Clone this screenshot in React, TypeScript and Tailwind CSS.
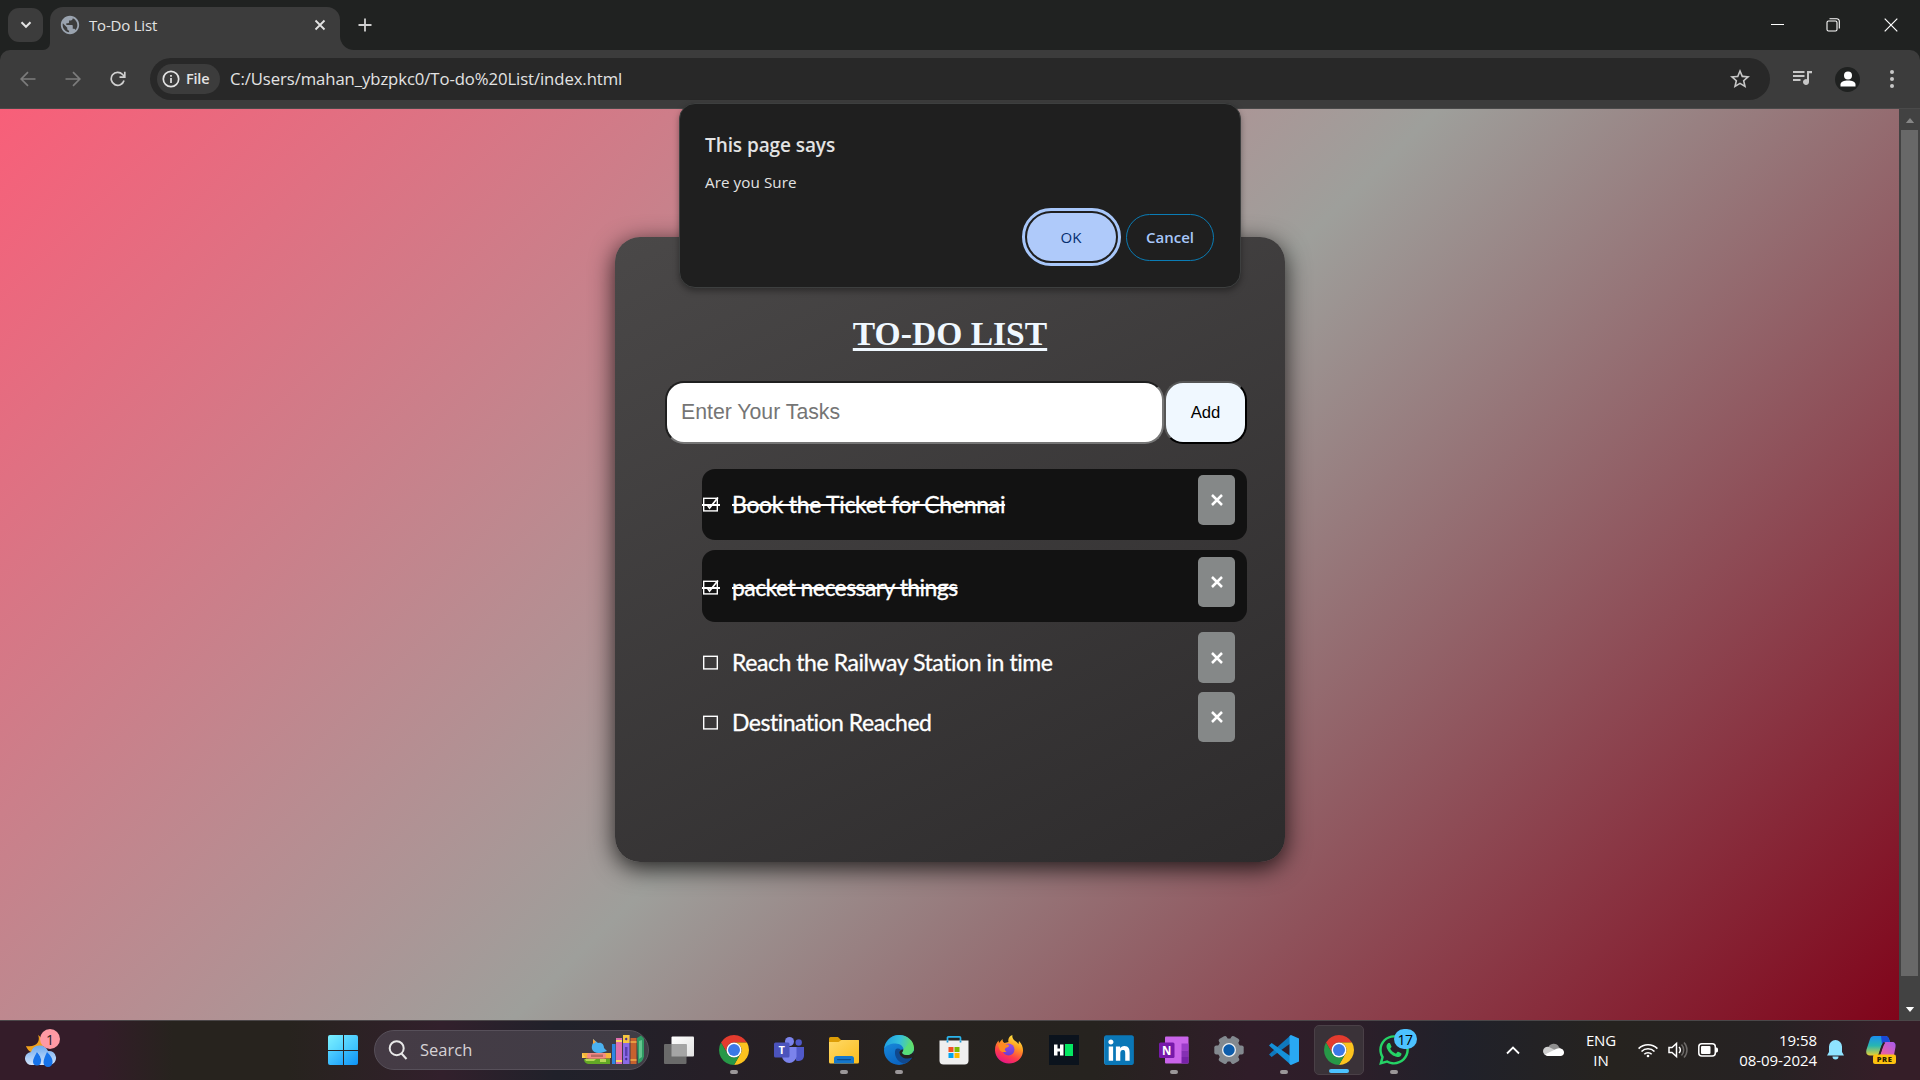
import React from "react";
import { FaLinkedin, FaWhatsapp } from "react-icons/fa";
import { MdStarOutline, MdPublic } from "react-icons/md";

const UI = "font-['Open_Sans','Noto_Sans',sans-serif]";

function ChromeIcon() {
  return (
    <svg viewBox="2 2 44 44" className="size-[30px]">
      <path d="M4.95 13A22 22 0 0 1 43.05 13H24A11 11 0 0 0 14.47 29.5Z" fill="#e33b2e" />
      <path d="M43.05 13A22 22 0 0 1 24 46L33.53 29.5A11 11 0 0 0 24 13Z" fill="#fcc31e" />
      <path d="M24 46A22 22 0 0 1 4.95 13L14.47 29.5A11 11 0 0 0 33.53 29.5Z" fill="#279847" />
      <circle cx="24" cy="24" r="11" fill="#fff" />
      <circle cx="24" cy="24" r="8.8" fill="#3b78e7" />
    </svg>
  );
}

function TaskViewIcon() {
  return (
    <svg viewBox="0 0 30 30" className="size-[30px]">
      <defs>
        <linearGradient id="tv" x1="0" y1="0" x2="1" y2="1"><stop stopColor="#fff" /><stop offset="1" stopColor="#e2e2e2" /></linearGradient>
      </defs>
      <rect x="7.500" y="1.500" width="22.500" height="20" rx="1" fill="url(#tv)" />
      <rect x="0" y="9" width="22.500" height="20" rx="1" fill="#6a6a6a" />
      <rect x="7.500" y="9" width="15" height="12.500" fill="#a5a5a5" />
    </svg>
  );
}

function TeamsIcon() {
  return (
    <svg viewBox="0 0 30 30" className="size-[30px]">
      <circle cx="24.700" cy="7.500" r="3.200" fill="#5059c9" />
      <path d="M20 12h10v8.500a5.500 5.500 0 0 1-8 5z" fill="#5059c9" />
      <circle cx="15.500" cy="6.500" r="4.500" fill="#7b83eb" />
      <path d="M8 12h14.500v9.500a7.300 7.300 0 0 1-14.500 0z" fill="#7b83eb" />
      <rect x="0" y="7.500" width="15.500" height="15" rx="1.500" fill="#4b53bc" />
      <text x="7.700" y="19" textAnchor="middle" fontSize="11" fontWeight="700" fill="#fff" fontFamily="Open Sans">T</text>
    </svg>
  );
}

function FolderIcon() {
  return (
    <svg viewBox="0 0 30 30" className="size-[30px]">
      <defs>
        <linearGradient id="fo" x1="0" y1="0" x2="1" y2="1"><stop stopColor="#ffd968" /><stop offset="1" stopColor="#fbbd1d" /></linearGradient>
      </defs>
      <path d="M0 3.500a1.500 1.500 0 0 1 1.500-1.500h7.500l3 3H30v6H0z" fill="#dd9d06" />
      <path d="M0 7h9.500l3-2H29a1 1 0 0 1 1 1v21a1.500 1.500 0 0 1-1.500 1.500h-27A1.500 1.500 0 0 1 0 27z" fill="url(#fo)" />
      <path d="M5 28.500v-5a2.500 2.500 0 0 1 2.500-2.500h15a2.500 2.500 0 0 1 2.500 2.500v5z" fill="#1577cb" />
      <rect x="8" y="24" width="14" height="1.200" rx=".6" fill="#0b4c8c" />
    </svg>
  );
}

function EdgeIcon() {
  return (
    <svg viewBox="0 0 30 30" className="size-[30px]">
      <defs>
        <linearGradient id="e1" x1="0" y1=".4" x2="1" y2=".5"><stop stopColor="#1f9fe0" /><stop offset=".5" stopColor="#35c0dc" /><stop offset="1" stopColor="#6ae35b" /></linearGradient>
        <linearGradient id="e2" x1="0" y1="0" x2=".5" y2="1"><stop stopColor="#1b93e2" /><stop offset="1" stopColor="#0a63c0" /></linearGradient>
      </defs>
      <circle cx="15" cy="15" r="15" fill="url(#e2)" />
      <path d="M.3 13.500C1.500 5.500 7.500 0 15.200 0 23.500 0 30 6 30 13c0 4.500-3.500 7-7 7-3.200 0-4.700-1.200-4.700-2.200 0-.8 1.200-1.300 1.200-3.300 0-3.200-3.500-6-8-6C6.500 8.500 2 10.500.3 13.500z" fill="url(#e1)" />
      <path d="M11.500 14.500C9.500 20 13 27 20 28.700 24 27.500 27 25 28.500 21.500 23 24.500 16 23 15.300 18c-.2-1.600.6-2.700 1.500-3.500-1.500-1.500-4.500-1.500-5.300 0z" fill="#10498f" />
      <path d="M19.500 14.500c0 2-1.200 2.500-1.200 3.300 0 1 1.500 2.200 4.700 2.200 2.800 0 5.600-1.600 6.600-4.300L30 20l-2 2.500C23 25 16 23 15.300 18c-.2-1.600.9-3.600 4.200-3.500z" fill="#24211f" />
      <path d="M30 13c0 4.500-3.500 7-7 7-3.200 0-4.700-1.200-4.700-2.200 0-.8 1.200-1.300 1.200-3.300L25 8z" fill="#58dd78" />
      <path d="M28.800 20.500l2 .500-1 3-2-1z" fill="#24211f" />
    </svg>
  );
}

function StoreIcon() {
  return (
    <svg viewBox="0 0 30 30" className="size-[30px]">
      <path d="M8.500 7V2.800a1 1 0 0 1 1-1h11a1 1 0 0 1 1 1V7" fill="none" stroke="#2bb5ec" strokeWidth="1.700" />
      <path d="M.5 5.500h29v20a4 4 0 0 1-4 4h-21a4 4 0 0 1-4-4z" fill="#efefef" />
      <path d="M8.500 7.500v-2m13 2v-2" stroke="#1795d4" strokeWidth="1.700" />
      <rect x="9.500" y="12" width="5" height="5" fill="#f25022" />
      <rect x="15.500" y="12" width="5" height="5" fill="#7fba00" />
      <rect x="9.500" y="18" width="5" height="5" fill="#00a4ef" />
      <rect x="15.500" y="18" width="5" height="5" fill="#ffb900" />
    </svg>
  );
}

function FirefoxIcon() {
  return (
    <svg viewBox="0 0 30 30" className="size-[30px]">
      <defs>
        <linearGradient id="ff" x1=".75" y1="0" x2=".3" y2="1"><stop stopColor="#fff04a" /><stop offset=".35" stopColor="#ff9f20" /><stop offset=".7" stopColor="#ff3b4b" /><stop offset="1" stopColor="#e3128c" /></linearGradient>
        <linearGradient id="fp" x1="0" y1="0" x2="0" y2="1"><stop stopColor="#9a4ee8" /><stop offset="1" stopColor="#6a3cd0" /></linearGradient>
      </defs>
      <path d="M18.500 0c-.8 2.500 1 5 3.500 6.500 1.200.8 2 1.800 2.400 2.700L25 6c3 3 4.200 6.800 4 10-.5 7.500-6.500 12.500-14 12.500S1.200 22.500 1 15.500C.9 11 2.300 8 4.500 5.500L5 8l3.500-4c0 2 .5 3 2 4l4-1c-1-3 1-6 4-7z" fill="url(#ff)" />
      <circle cx="14.500" cy="14.500" r="6" fill="url(#fp)" />
      <path d="M4 10c3-2.500 6-2 8-.5 1.500 0 3 .5 3 1.200 0 1-1.500 1.600-3 2-1.800 1-1.500 3 .5 4-3 1-6 .2-7-2.200z" fill="#ff8a20" />
    </svg>
  );
}

function HackerEarthIcon() {
  return (
    <svg viewBox="0 0 30 30" className="size-[30px]">
      <rect width="30" height="30" fill="#0b131d" />
      <path d="M5 9.500h3.500v4h2.500v-4h3.500v11h-3.500v-4H8.500v4H5z" fill="#fff" />
      <rect x="16" y="9" width="8" height="12" fill="#04e762" />
    </svg>
  );
}

function OneNoteIcon() {
  return (
    <svg viewBox="0 0 30 30" className="size-[30px]">
      <rect x="6" y="1.500" width="23.500" height="27" rx="1" fill="#ca64ea" />
      <rect x="22.500" y="8.500" width="7" height="7" fill="#9b3cc8" />
      <rect x="22.500" y="15.500" width="7" height="6.500" fill="#8530b4" />
      <rect x="22.500" y="22" width="7" height="6.500" fill="#7722a8" />
      <rect x="0" y="7.500" width="15.500" height="15.500" rx="1.500" fill="#7719aa" />
      <text x="7.700" y="19.500" textAnchor="middle" fontSize="11.500" fontWeight="700" fill="#fff" fontFamily="Open Sans">N</text>
    </svg>
  );
}

function SettingsIcon() {
  return (
    <svg viewBox="0 0 30 30" className="size-[30px]">
      <g fill="#83898f">
        <circle cx="15" cy="15" r="11.500" />
        <rect x="10.500" y="0.700" width="9" height="28.600" rx="2" transform="rotate(30 15 15)" />
        <rect x="10.500" y="0.300" width="9" height="29.400" rx="2" transform="rotate(90 15 15)" />
        <rect x="10.500" y="0.700" width="9" height="28.600" rx="2" transform="rotate(150 15 15)" />
      </g>
      <circle cx="15" cy="15" r="7" fill="#eef1f4" />
      <circle cx="15" cy="15" r="5.700" fill="#0c5cab" />
    </svg>
  );
}

function CodeIcon() {
  return (
    <svg viewBox="0 0 30 30" className="size-[30px]">
      <path d="M22 0L0 19.500l2.600 2.500L22 8z" fill="#0f78bd" />
      <path d="M2.600 8L0 10.500 22 30V21.500z" fill="#1490d8" />
      <path d="M22 0l8 3.500v23L22 30l-1.500-1V1z" fill="#29a8f4" />
    </svg>
  );
}

function WeatherIcon() {
  return (
    <svg viewBox="0 0 32 38" className="h-[38px] w-8">
      <defs>
        <linearGradient id="cl" x1="0" y1="0" x2="0" y2="1"><stop stopColor="#6ba9f0" /><stop offset="1" stopColor="#d3e4fa" /></linearGradient>
      </defs>
      <path d="M13 4c3 6-2 13-12 11 2 6 8 9 14 5 5-4 5-12-2-16z" fill="#f0a01c" />
      <path d="M7 34a6.500 6.500 0 0 1-1-13 9 9 0 0 1 17-1 7 7 0 0 1 2 14z" fill="url(#cl)" />
      <path d="M12 21c3.500 4 4.500 7 4 9.500a4 4 0 0 1-8 0c0-2.500 2-5.500 4-9.500zM22 21c4 4 6 7 5.500 10.500a4.500 4.500 0 0 1-9 0c0-3 1.500-6.500 3.500-10.500z" fill="#1673ea" />
      <path d="M12 21c3.500 4 4.500 7 4 9.500a4 4 0 0 1-.8 2C18 27 16 23 12 21z" fill="#9cc6f8" />
    </svg>
  );
}

function BooksIcon() {
  return (
    <svg viewBox="0 0 62 30" className="h-[30px] w-[62px]">
      <path d="M0 18h29v5H0z" fill="#ffcf52" />
      <path d="M0 18h29l-1 5.500H4z" fill="#f5b63a" />
      <rect x="5" y="18" width="19" height="5.500" rx="2.500" fill="#f48a86" />
      <rect x="9" y="19.500" width="12" height="2.500" fill="#b86b62" />
      <path d="M2 24h26v5H6a5 5 0 0 1-4-5z" fill="#63a825" />
      <path d="M3 24h11l-2 2H4zM18 24h6v3h-6z" fill="#b6d957" />
      <path d="M11 4l5 4c4-1 6 2 6 5l3 3-3 1c-5 2-11 1-12-3-.5-2 0-4 1-6z" fill="#4bb1ef" />
      <path d="M11 4l3 3-3 2z" fill="#f6a33a" />
      <rect x="30" y="9" width="3.500" height="20" fill="#2f86e4" />
      <rect x="34" y="3" width="6" height="26" fill="#e06fae" />
      <path d="M34 6h6M34 26h6" stroke="#ffd45e" strokeWidth="2" />
      <rect x="41" y="0" width="6.500" height="29" fill="#8a6ae6" />
      <rect x="41" y="0" width="6.500" height="8" fill="#f7c63f" />
      <rect x="43" y="12" width="2.500" height="9" fill="#5a3eb0" />
      <path d="M44.200 2.500l1.500 1.500-1.500 1.500-1.500-1.500zM44.200 22.500l1.500 1.500-1.500 1.500-1.500-1.500z" fill="#452a8f" />
      <rect x="48.500" y="3" width="6" height="26" fill="#c7622e" />
      <path d="M48.500 7h6M48.500 25h6" stroke="#f2b04a" strokeWidth="1.500" />
      <path d="M55 3l4-2.500 3 3v18c-1 4-3 6-6 7z" fill="#2f9a63" />
      <path d="M57 6l3-1v17l-3 2z" fill="#65c48e" />
    </svg>
  );
}

function CopilotIcon() {
  return (
    <svg viewBox="0 0 30 30" className="h-[30px] w-[30px]">
      <defs>
        <linearGradient id="c1" x1="0" y1="0" x2="0" y2="1"><stop stopColor="#1b8ff0" /><stop offset=".5" stopColor="#27b6b0" /><stop offset="1" stopColor="#e8d032" /></linearGradient>
        <linearGradient id="c2" x1="1" y1="0" x2="0" y2="1"><stop stopColor="#a65bf0" /><stop offset="1" stopColor="#f2609a" /></linearGradient>
      </defs>
      <path d="M8 1h11c3 0 4 2 5 6h-4c-3 0-4 2-5 5l-2 6c-.5 2-2 2.500-4 2.500H4c-3 0-4.500-2-3.500-6L4 4c.6-2 2-3 4-3z" fill="url(#c1)" />
      <path d="M15 1h4c3 0 4 2 5 6h-4c-2 0-3 1-4 2z" fill="#1a49d8" />
      <path d="M20 7h6c3 0 4 2 3.500 5L28 20H14l3-9c.5-2.500 1-4 3-4z" fill="url(#c2)" />
      <path d="M18.500 7.500C16.500 9 15.500 14 13.500 19.500" fill="none" stroke="#2a1f26" strokeWidth="1.800" />
      <rect x="7" y="19.500" width="23" height="9.500" rx="2" fill="#fcc10f" />
      <text x="18.500" y="27" textAnchor="middle" fontSize="7.500" fontWeight="800" letterSpacing=".6" fill="#2a2000" fontFamily="Open Sans">PRE</text>
    </svg>
  );
}

function CheckBox({ checked }: { checked: boolean }) {
  return (
    <svg viewBox="0 0 18 18" className="size-[18px] shrink-0" fill="none" stroke="#fff">
      <rect x="1.700" y="3.300" width="13.600" height="12.600" strokeWidth="1.400" />
      {checked && (
        <>
          <path d="M5 9.500l2.500 3.500L16 2.500" strokeWidth="1.700" />
          <path d="M0 10h18" strokeWidth="2" />
        </>
      )}
    </svg>
  );
}

function Task({ text, done, spacing, box, label, button }: { text: string; done: boolean; spacing: string; box: string; label: string; button: string }) {
  return (
    <li className={`flex w-[545px] items-start rounded-[13px] ${box}`}>
      <div className={`flex items-center ${label}`}>
        <CheckBox checked={done} />
        <span className={`ml-3 font-['Lato',sans-serif] text-[23px] leading-[30px] whitespace-nowrap text-white [-webkit-text-stroke:0.3px_white] ${spacing} ${done ? "line-through decoration-2" : ""}`}>{text}</span>
      </div>
      <button className={`mr-3 ml-auto flex w-[37px] items-center justify-center rounded-[5px] bg-[#858888] ${button}`}>
        <svg viewBox="0 0 12 12" className="size-3" stroke="#fff" strokeWidth="2.500"><path d="M1 1l10 10M11 1L1 11" /></svg>
      </button>
    </li>
  );
}

function BrowserBar() {
  return (
    <header className={`h-[109px] bg-[#202221] text-[#e3e3e3] ${UI}`}>
      <div className="flex h-[50px]">
        <div className="mt-2 ml-2 flex h-[34px] w-[35px] items-center justify-center rounded-[11px] bg-[#3c3c3c]">
          <svg viewBox="0 0 12 8" className="h-2 w-3" fill="none" stroke="#e3e3e3" strokeWidth="2"><path d="M1.500 1.200L6 5.800l4.500-4.600" /></svg>
        </div>
        <div className="mt-[30px] h-5 w-[7px] bg-[#3c3c3c]"><div className="h-5 w-[7px] rounded-br-[7px] bg-[#202221]" /></div>
        <div className="mt-[7px] flex h-[43px] w-[290px] items-center rounded-t-[13px] bg-[#3c3c3c] pb-[6px] pl-[9px]">
          <MdPublic className="mb-px size-[22px] text-[#9aa3af]" />
          <span className="ml-2 text-[15px] tracking-[-0.200px]">To-Do List</span>
          <svg viewBox="0 0 12 12" className="mr-[14px] mb-[2px] ml-auto size-3" stroke="#e3e3e3" strokeWidth="1.800"><path d="M1.500 1.500l9 9M10.500 1.500l-9 9" /></svg>
        </div>
        <div className="mt-[34px] size-4 bg-[#3c3c3c]"><div className="size-4 rounded-bl-[14px] bg-[#202221]" /></div>
        <svg viewBox="0 0 14 14" className="mt-[18px] ml-[2px] size-[14px]" stroke="#d0d0d0" strokeWidth="1.800"><path d="M7 .5v13M.5 7h13" /></svg>
        <div className="mt-6 mr-[42px] ml-auto h-px w-[13px] bg-white" />
        <svg viewBox="0 0 14 14" className="mt-[18px] mr-[44px] size-[14px]" fill="none" stroke="#fff" strokeWidth="1.100"><rect x="1" y="3" width="10" height="10" rx="1.500" /><path d="M3.500.7h7.300a2.500 2.500 0 0 1 2.500 2.500v7.300" /></svg>
        <svg viewBox="0 0 14 14" className="mt-[18px] mr-[22px] size-[14px]" stroke="#fff" strokeWidth="1.200"><path d="M.7.7l12.600 12.600M13.300.7L.7 13.300" /></svg>
      </div>
      <div className="flex h-[59px] items-center rounded-t-[10px] border-b border-[#4a4a4a] bg-[#3c3c3c]">
        <svg viewBox="0 0 16 16" className="ml-5 size-4" fill="none" stroke="#7c7c7c" strokeWidth="1.700"><path d="M15.500 8H1.500M8 1.200L1.200 8 8 14.800" /></svg>
        <svg viewBox="0 0 16 16" className="ml-[29px] size-4" fill="none" stroke="#7c7c7c" strokeWidth="1.700"><path d="M.5 8h14M8 1.200L14.800 8 8 14.800" /></svg>
        <svg viewBox="0 0 16 16" className="ml-[29px] size-4" fill="none" stroke="#d0d0d0" strokeWidth="1.700"><path d="M14 9.500A6.500 6.500 0 1 1 12.600 3.500L14.500 5.500M14.800.8v5.300H9.500" /></svg>
        <div className="ml-6 flex h-[42px] w-[1620px] items-center rounded-full bg-[#282828] pl-[7px]">
          <div className="flex h-[30px] w-[63px] items-center rounded-full bg-[#3c3c3c] pl-[5px]">
            <svg viewBox="0 0 18 18" className="size-[18px]" fill="none" stroke="#e3e3e3" strokeWidth="1.700"><circle cx="9" cy="9" r="7.700" /><path d="M9 8v5M9 5v1.700" /></svg>
            <span className="ml-[6px] text-[14.500px] font-semibold tracking-[-0.200px]">File</span>
          </div>
          <span className="ml-[10px] text-[16.700px] tracking-[-0.080px]">C:/Users/mahan_ybzpkc0/To-do%20List/index.html</span>
          <MdStarOutline className="mr-[18px] ml-auto size-6 text-[#c7c7c7]" />
        </div>
        <svg viewBox="0 0 20 16" className="mb-[3px] ml-[23px] h-4 w-5 text-[#c7c7c7]" fill="currentColor">
          <path d="M0 1h11.500v2H0zM0 5h11.500v2H0zM0 9h7.500v2H0z" />
          <path d="M14 1h5v2.200h-3V12a3 3 0 1 1-2-2.800z" />
        </svg>
        <div className="ml-[22px] flex size-[25px] items-center justify-center rounded-full bg-[#1f2120]">
          <svg viewBox="0 0 16 16" className="size-4" fill="#fff"><circle cx="8" cy="4.500" r="4" /><path d="M.5 15.500v-2C.5 10.700 4 9.500 8 9.500s7.500 1.200 7.500 4v2z" /></svg>
        </div>
        <div className="ml-[30px] flex flex-col gap-[3px]">
          <i className="size-1 rounded-full bg-[#c7c7c7]" /><i className="size-1 rounded-full bg-[#c7c7c7]" /><i className="size-1 rounded-full bg-[#c7c7c7]" />
        </div>
      </div>
    </header>
  );
}

function Dialog() {
  return (
    <div className={`absolute top-[103px] left-[679px] h-[185px] w-[562px] rounded-[16px] border border-[#3d3f3f] bg-[#1f1f1f] pl-[25px] text-[#e3e3e3] shadow-[0_3px_6px_rgba(0,0,0,0.35)] ${UI}`}>
      <h2 className="mt-7 text-[19px] leading-[26px] font-semibold tracking-[-0.080px]">This page says</h2>
      <p className="mt-[14px] text-[15.200px] leading-5 tracking-[0.080px]">Are you Sure</p>
      <div className="mt-[16px] flex items-center text-[15px]">
        <button className="ml-[317px] flex h-[58px] w-[99px] items-center justify-center rounded-full border-[3px] border-[#a8c7fa] p-[2px]">
          <span className="flex size-full items-center justify-center rounded-full bg-[#afcafa] pr-px text-[#062e6f]">OK</span>
        </button>
        <button className="ml-[5px] h-[47px] w-[88px] rounded-full border border-[#0a7cb5] font-semibold text-[#a8c7fa]">Cancel</button>
      </div>
    </div>
  );
}

function TodoCard() {
  return (
    <main className="mt-32 ml-[615px] flex h-[625px] w-[670px] flex-col rounded-[25px] bg-linear-[153deg,#4a4848,#2d2b2c] pt-[76px] shadow-[0_6px_24px_rgba(0,0,0,0.8)]">
      <h1 className="text-center font-['Liberation_Serif',serif] text-[33.600px] leading-[42px] font-bold text-[#f0f8ff] underline decoration-[3px] underline-offset-[3px]">TO-DO LIST</h1>
      <div className="mt-[26px] ml-[50px] flex font-['Liberation_Sans',sans-serif]">
        <input className="h-[63px] w-[499px] rounded-[19px] border-2 border-t-[#1f1f1f] border-r-[#767676] border-b-[#767676] border-l-[#1f1f1f] bg-white pl-[14px] text-[21.250px] placeholder:text-[#757575]" placeholder="Enter Your Tasks" />
        <button className="h-[63px] w-[83px] rounded-[19px] border-2 border-t-[#555] border-r-black border-b-black border-l-[#555] bg-[#f0f8ff] text-[16.667px] text-black">Add</button>
      </div>
      <ul className="mt-[25px] ml-[87px]">
        <Task text="Book the Ticket for Chennai" done spacing="tracking-[-0.310px]" box="h-[71px] bg-[#121212]" label="mt-[20px]" button="mt-[6px] h-[50px]" />
        <Task text="packet necessary things" done spacing="tracking-[-0.570px]" box="mt-[10px] h-[72px] bg-[#121212]" label="mt-[22px]" button="mt-[7px] h-[50px]" />
        <Task text="Reach the Railway Station in time" done={false} spacing="tracking-[-0.440px]" box="mt-[10px] h-[51px]" label="mt-[15px]" button="h-[51px]" />
        <Task text="Destination Reached" done={false} spacing="tracking-[-0.500px]" box="mt-[9px] h-[50px]" label="mt-[15px]" button="h-[50px]" />
      </ul>
    </main>
  );
}

function TaskbarItem({ children, open, active }: { children: React.ReactNode; open?: boolean; active?: boolean }) {
  return (
    <div className="flex h-[60px] w-[55px] shrink-0 items-center justify-center">
      <div className={`relative flex size-[50px] items-center justify-center rounded-[5px] ${active ? "border border-[#4a4047] bg-[#3a3238]" : ""}`}>
        {children}
        {open && <i className={`absolute bottom-px h-1 rounded-full ${active ? "w-5 bg-[#4cc2ff]" : "w-2 bg-[#9b9799]"}`} />}
      </div>
    </div>
  );
}

function Taskbar() {
  return (
    <footer className={`flex h-[60px] items-center border-t border-[#4b4749] bg-[linear-gradient(90deg,#341c29_0%,#341c29_5%,#27231e_9%,#27231e_15%,#32202c_23%,#20212a_29%,#261f27_37%,#272320_47%,#26231f_57%,#301d29_65%,#2d1e29_70%,#20212a_76%,#26231f_84%,#262223_92%,#351e28_98%)] pb-px text-white ${UI}`}>
      <div className="relative ml-[25px]">
        <WeatherIcon />
        <span className="absolute -top-[2px] left-[15px] flex h-5 w-5 items-center justify-center rounded-full bg-[#ff99a4] text-[14px] text-[#222]">1</span>
      </div>
      <div className="ml-[271px] grid size-[30px] grid-cols-2 gap-px">
        <i className="rounded-tl-[2px] bg-linear-to-br from-[#7bf0ff] to-[#4fd0ff]" /><i className="rounded-tr-[2px] bg-linear-to-br from-[#62dcff] to-[#35bdfb]" />
        <i className="rounded-bl-[2px] bg-linear-to-br from-[#52d1ff] to-[#20a5fb]" /><i className="rounded-br-[2px] bg-linear-to-br from-[#38bcfb] to-[#0c93f7]" />
      </div>
      <div className="ml-4 flex h-10 w-[275px] items-center rounded-full border border-[#57505a] bg-linear-to-r from-[#453b45] to-[#403d46] pl-[13px]">
        <svg viewBox="0 0 20 20" className="size-5" fill="none" stroke="#e8e8e8" strokeWidth="2"><circle cx="8.700" cy="8.200" r="7" /><path d="M13.500 13.500l5 5.500" /></svg>
        <span className="ml-3 text-[16.500px] text-[#d6d2d5]">Search</span>
        <span className="mr-1 ml-auto"><BooksIcon /></span>
      </div>
      <nav className="ml-[2px] flex">
        <TaskbarItem><TaskViewIcon /></TaskbarItem>
        <TaskbarItem open><ChromeIcon /></TaskbarItem>
        <TaskbarItem><TeamsIcon /></TaskbarItem>
        <TaskbarItem open><FolderIcon /></TaskbarItem>
        <TaskbarItem open><EdgeIcon /></TaskbarItem>
        <TaskbarItem><StoreIcon /></TaskbarItem>
        <TaskbarItem><FirefoxIcon /></TaskbarItem>
        <TaskbarItem><HackerEarthIcon /></TaskbarItem>
        <TaskbarItem>
          <span className="flex size-[29px] items-center justify-center rounded-[4px] bg-white"><FaLinkedin className="size-[34px] shrink-0 text-[#0a77b7]" /></span>
        </TaskbarItem>
        <TaskbarItem open><OneNoteIcon /></TaskbarItem>
        <TaskbarItem><SettingsIcon /></TaskbarItem>
        <TaskbarItem open><CodeIcon /></TaskbarItem>
        <TaskbarItem open active><ChromeIcon /></TaskbarItem>
        <TaskbarItem open>
          <FaWhatsapp className="size-[34px] text-[#25d366]" />
          <span className="absolute top-[4px] left-[25px] flex h-5 w-[23px] items-center justify-center rounded-full bg-[#4cc2ff] text-[14px] tracking-[-0.500px] text-black">17</span>
        </TaskbarItem>
      </nav>
      <svg viewBox="0 0 14 9" className="ml-[85px] h-[9px] w-[14px]" fill="none" stroke="#fff" strokeWidth="1.800"><path d="M1 7.500l6-6 6 6" /></svg>
      <svg viewBox="0 0 21 14" className="mb-0.5 ml-[23px] h-[14px] w-[21px]">
        <path d="M5 6a6 6 0 0 1 11-1l3 4H2z" fill="#8f8f8f" />
        <path d="M0 9a4.500 4.500 0 0 1 6-4l8 4-4 4.500H4.500A4.500 4.500 0 0 1 0 9z" fill="#cfcfcf" />
        <path d="M2 12.500L13 7c5-2 8 1 8 3.500 0 2-1.500 3.500-3.500 3.500h-13A5 5 0 0 1 2 12.500z" fill="#fff" />
      </svg>
      <div className="ml-[21px] w-[32px] text-center text-[15px] leading-5 tracking-[-0.100px]">ENG<br />IN</div>
      <svg viewBox="0 0 20 15" className="ml-[21px] h-[15px] w-5" fill="none" stroke="#fff" strokeWidth="1.600"><path d="M.6 5.600a13.300 13.300 0 0 1 18.800 0M3.500 8.500a9.200 9.200 0 0 1 13 0M6.300 11.300a5.200 5.200 0 0 1 7.400 0" /><circle cx="10" cy="13" r="1.300" fill="#fff" stroke="none" /></svg>
      <svg viewBox="0 0 20 18" className="ml-[10px] h-[18px] w-5" fill="none" stroke="#fff" strokeWidth="1.500"><path d="M1 6.500h3l4.500-4v13l-4.500-4H1z" /><path d="M11 6a4 4 0 0 1 0 6" /><path d="M13.500 3.500a8 8 0 0 1 0 11M16 1.500a11 11 0 0 1 0 15" stroke="#6d6a68" /></svg>
      <svg viewBox="0 0 20 14" className="ml-[10px] h-[14px] w-5"><rect x=".8" y=".8" width="16.500" height="12.200" rx="3" fill="none" stroke="#fff" strokeWidth="1.500" /><rect x="3" y="3" width="9.500" height="8" rx="1" fill="#fff" /><path d="M18 4.500c3 0 3 5 0 5z" fill="#fff" /></svg>
      <div className="ml-[17px] w-[82px] text-right text-[15px] leading-5 tracking-[-0.050px] whitespace-nowrap">19:58<br />08-09-2024</div>
      <svg viewBox="0 0 17 20" className="ml-[10px] h-5 w-[17px]" fill="#8fe3ff"><path d="M8.500 0a6.500 6.500 0 0 1 6.500 6.500V12l2 3.500H0L2 12V6.500A6.500 6.500 0 0 1 8.500 0z" /><path d="M5.500 16.500h6a3 3 0 0 1-6 0z" /></svg>
      <span className="ml-[22px]"><CopilotIcon /></span>
    </footer>
  );
}

export default function App() {
  return (
    <div className="relative h-[1080px] w-[1920px] overflow-hidden">
      <BrowserBar />
      <div className="flex h-[911px]">
        <div className="h-full w-[1899px] overflow-hidden bg-linear-[135.500deg,#f85f79_0%,#9e9f9b_50.900%,#80041a_100%]">
          <TodoCard />
        </div>
        <div className="flex w-[21px] flex-col items-center bg-[#424242]">
          <svg viewBox="0 0 10 6" className="mt-[9px] h-[5px] w-[10px]" fill="#868686"><path d="M0 6l5-6 5 6z" /></svg>
          <div className="mt-[7px] h-[846px] w-[17px] bg-[#686868]" />
          <svg viewBox="0 0 10 6" className="mt-[31px] h-[5px] w-[10px]" fill="#fff"><path d="M0 0l5 6 5-6z" /></svg>
        </div>
      </div>
      <Taskbar />
      <Dialog />
    </div>
  );
}
